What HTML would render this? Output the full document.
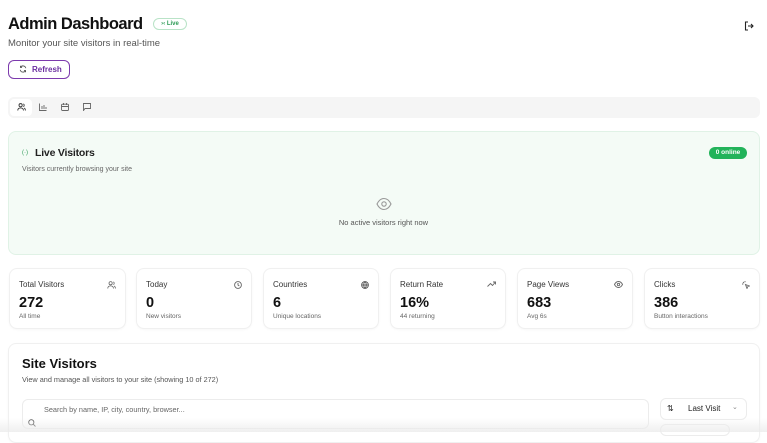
<!DOCTYPE html>
<html><head><meta charset="utf-8"><style>
*{box-sizing:border-box;margin:0;padding:0}
body{width:767px;height:432px;overflow:hidden;background:#fff;font-family:"Liberation Sans",sans-serif;color:#111;position:relative}
.abs{position:absolute}
svg{display:block}
.card{position:absolute;border:1px solid #f0f0f0;border-radius:8px;background:#fff;box-shadow:0 1px 2px rgba(0,0,0,.03)}
.st .t{position:absolute;left:9px;top:11px;font-size:8px;color:#333}
.st .v{position:absolute;left:9px;top:26px;font-size:14.5px;font-weight:bold}
.st .s{position:absolute;left:9px;top:44px;font-size:6.5px;color:#666}
.st svg{position:absolute;right:9px;top:12px}
</style></head><body>
<div class="abs" style="left:8px;top:15px;font-size:16.5px;font-weight:bold;letter-spacing:-.5px">Admin Dashboard</div>
<div class="abs" style="left:153px;top:18px;width:34px;height:12px;border:1px solid #b9e3c7;border-radius:7px;font-size:6px;color:#2c9a55;text-align:center;line-height:10px;font-weight:bold">›‹ Live</div>
<div class="abs" style="left:8px;top:38px;font-size:9.5px;color:#555">Monitor your site visitors in real-time</div>
<svg class="abs" style="left:744px;top:21px" width="10" height="10" viewBox="0 0 10 10" fill="none" stroke="#222" stroke-width="1.1"><path d="M4 1H1.5v8H4M4 5h5M7 3l2 2-2 2"/></svg>
<div class="abs" style="left:8px;top:60px;width:62px;height:19px;border:1px solid #7c3aad;border-radius:6px;color:#6b2fa0;font-size:8px;font-weight:bold;line-height:17px;padding-left:23px">Refresh</div>
<svg class="abs" style="left:19px;top:65px" width="8" height="8" viewBox="0 0 10 10" fill="none" stroke="#555" stroke-width="1.1"><path d="M8.5 4A3.6 3.6 0 0 0 1.8 3M1.5 6a3.6 3.6 0 0 0 6.7 1M1.8 1v2h2M8.2 9V7h-2"/></svg>
<div class="abs" style="left:8px;top:97px;width:752px;height:21px;background:#f5f5f5;border-radius:6px"></div>
<div class="abs" style="left:10px;top:99px;width:22px;height:17px;background:#fff;border-radius:4px"></div>
<svg class="abs" style="left:17px;top:103px" width="9" height="8" viewBox="0 0 10 9" fill="none" stroke="#333" stroke-width="1"><circle cx="4" cy="2.5" r="1.8"/><path d="M.8 8.5c0-2 1.4-3 3.2-3s3.2 1 3.2 3M7 1a1.6 1.6 0 0 1 0 3M8 5.6c.8.4 1.4 1.2 1.4 2.9"/></svg>
<svg class="abs" style="left:39px;top:103px" width="8" height="8" viewBox="0 0 8 8" fill="none" stroke="#666" stroke-width=".9"><path d="M.5.5v7h7M3 6V3M5 6V2M7 6V4"/></svg>
<svg class="abs" style="left:61px;top:103px" width="8" height="8" viewBox="0 0 8 8" fill="none" stroke="#666" stroke-width=".9"><rect x=".5" y="1.2" width="7" height="6.3" rx="1"/><path d="M.5 3.5h7M2.5 0v2M5.5 0v2"/></svg>
<svg class="abs" style="left:83px;top:103px" width="8" height="8" viewBox="0 0 8 8" fill="none" stroke="#666" stroke-width=".9"><path d="M.5.5h7v5H2L.5 7.5z"/></svg>

<div class="abs" style="left:8px;top:131px;width:752px;height:124px;background:#f4fbf6;border:1px solid #e0f2e6;border-radius:8px"></div>
<div class="abs" style="left:22px;top:150px;font-size:6px;color:#2c9a55">(·)</div>
<div class="abs" style="left:35px;top:147px;font-size:10.5px;font-weight:bold;color:#222;letter-spacing:-.2px">Live Visitors</div>
<div class="abs" style="left:22px;top:166px;font-size:7px;color:#666">Visitors currently browsing your site</div>
<div class="abs" style="left:709px;top:147px;width:38px;height:12px;background:#22b35a;border-radius:7px;color:#fff;font-size:6.5px;font-weight:bold;text-align:center;line-height:12px">0 online</div>
<svg class="abs" style="left:376px;top:197px" width="16" height="14" viewBox="0 0 16 14" fill="none" stroke="#999" stroke-width="1.1"><path d="M1 7c2-4 4.5-5.5 7-5.5S13 3 15 7c-2 4-4.5 5.5-7 5.5S3 11 1 7z"/><circle cx="8" cy="7" r="2.2"/></svg>
<div class="abs" style="left:0;width:767px;top:218px;text-align:center;font-size:7.5px;color:#555">No active visitors right now</div>

<div class="card st" style="left:9px;top:268px;width:117px;height:61px"><div class="t">Total Visitors</div><div class="v">272</div><div class="s">All time</div><svg width="9" height="8" viewBox="0 0 10 9" fill="none" stroke="#666" stroke-width=".9"><circle cx="4" cy="2.5" r="1.8"/><path d="M.8 8.5c0-2 1.4-3 3.2-3s3.2 1 3.2 3M7 1a1.6 1.6 0 0 1 0 3M8 5.6c.8.4 1.4 1.2 1.4 2.9"/></svg></div>
<div class="card st" style="left:136px;top:268px;width:116px;height:61px"><div class="t">Today</div><div class="v">0</div><div class="s">New visitors</div><svg width="8" height="8" viewBox="0 0 8 8" fill="none" stroke="#666" stroke-width=".9"><circle cx="4" cy="4" r="3.4"/><path d="M4 2v2l1.3 1"/></svg></div>
<div class="card st" style="left:263px;top:268px;width:116px;height:61px"><div class="t">Countries</div><div class="v">6</div><div class="s">Unique locations</div><svg width="8" height="8" viewBox="0 0 8 8" fill="none" stroke="#555" stroke-width=".9"><circle cx="4" cy="4" r="3.4"/><path d="M.6 4h6.8M4 .6c1.8 2 1.8 4.8 0 6.8M4 .6c-1.8 2-1.8 4.8 0 6.8"/></svg></div>
<div class="card st" style="left:390px;top:268px;width:116px;height:61px"><div class="t">Return Rate</div><div class="v">16%</div><div class="s">44 returning</div><svg width="9" height="6" viewBox="0 0 9 6" fill="none" stroke="#666" stroke-width=".9"><path d="M.5 5.5l3-3 2 2 3-3.5M6 1h2.5v2.5"/></svg></div>
<div class="card st" style="left:517px;top:268px;width:116px;height:61px"><div class="t">Page Views</div><div class="v">683</div><div class="s">Avg 6s</div><svg width="9" height="7" viewBox="0 0 9 7" fill="none" stroke="#666" stroke-width=".9"><path d="M.5 3.5c1-2 2.5-3 4-3s3 1 4 3c-1 2-2.5 3-4 3s-3-1-4-3z"/><circle cx="4.5" cy="3.5" r="1.2"/></svg></div>
<div class="card st" style="left:644px;top:268px;width:116px;height:61px"><div class="t">Clicks</div><div class="v">386</div><div class="s">Button interactions</div><svg width="8" height="8" viewBox="0 0 8 8" fill="none" stroke="#666" stroke-width=".9"><path d="M3.5 3.5l4 1.5-1.8.7-.7 1.8zM1 1l1 1M3 0v1.3M0 3h1.3"/></svg></div>

<div class="card" style="left:8px;top:343px;width:752px;height:100px"></div>
<div class="abs" style="left:22px;top:356px;font-size:13px;font-weight:bold">Site Visitors</div>
<div class="abs" style="left:22px;top:375px;font-size:7.3px;color:#555">View and manage all visitors to your site (showing 10 of 272)</div>
<div class="abs" style="left:22px;top:399px;width:627px;height:30px;border:1px solid #ececec;border-radius:6px"></div>
<div class="abs" style="left:44px;top:405px;font-size:7.3px;color:#666">Search by name, IP, city, country, browser...</div>
<svg class="abs" style="left:28px;top:419px" width="8" height="8" viewBox="0 0 8 8" fill="none" stroke="#555" stroke-width=".9"><circle cx="3.3" cy="3.3" r="2.6"/><path d="M5.2 5.2l2.3 2.3"/></svg>
<div class="abs" style="left:660px;top:398px;width:87px;height:22px;border:1px solid #ececec;border-radius:6px"></div>
<div class="abs" style="left:667px;top:404px;font-size:8px;color:#222">⇅</div>
<div class="abs" style="left:688px;top:404px;font-size:8px;color:#222">Last Visit</div>
<div class="abs" style="left:732px;top:403px;font-size:7px;color:#888">⌄</div>
<div class="abs" style="left:660px;top:424px;width:70px;height:12px;border:1px solid #ececec;border-radius:6px"></div>
<div class="abs" style="left:0;top:418px;width:767px;height:14px;background:linear-gradient(rgba(240,240,240,0),rgba(235,235,235,.8))"></div>
</body></html>
